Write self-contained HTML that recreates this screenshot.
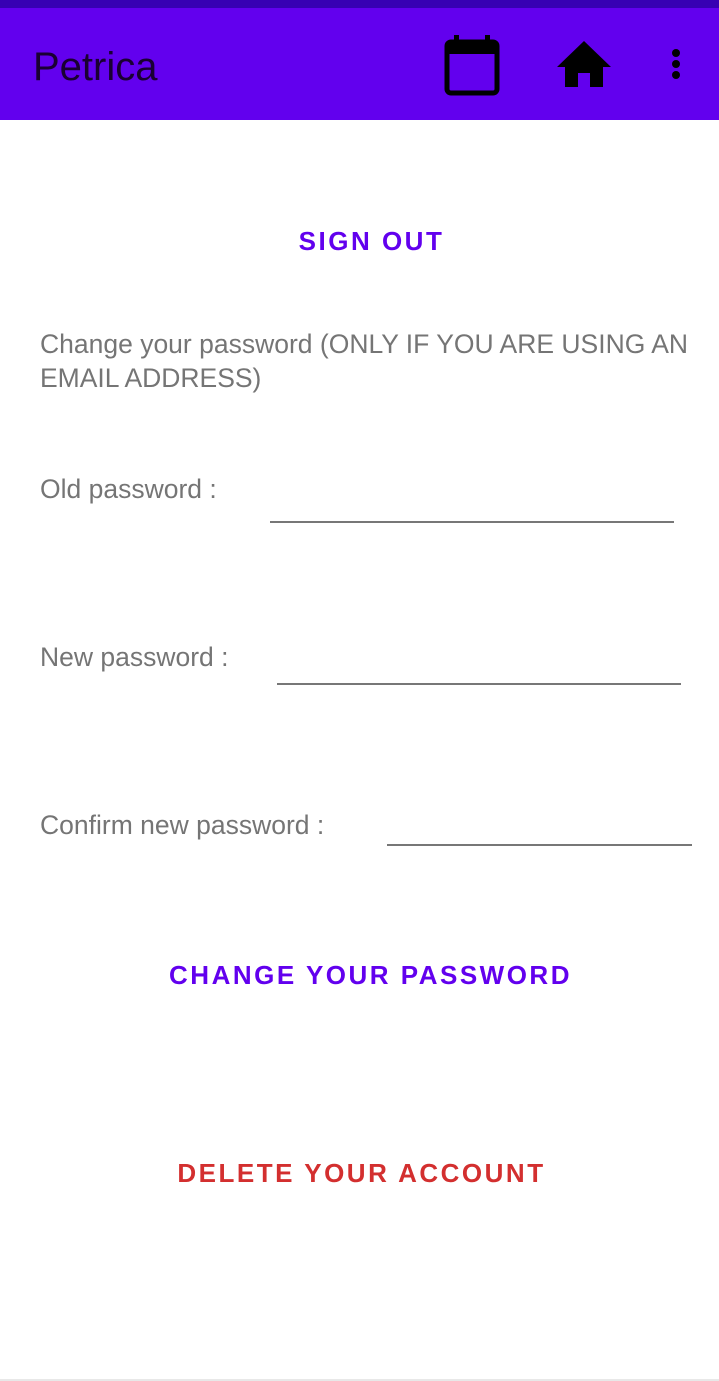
<!DOCTYPE html>
<html><head><meta charset="utf-8"><style>
body{margin:0;width:719px;height:1381px;background:#fff;font-family:"Liberation Sans",sans-serif;position:relative;overflow:hidden}
.sb{position:absolute;left:0;top:0;width:719px;height:8px;background:#3700B3}
.ab{position:absolute;left:0;top:8px;width:719px;height:112px;background:#6200EE}
.t{position:absolute;color:#757575;font-size:26.5px;white-space:nowrap}
.btn{position:absolute;left:0;width:719px;text-align:center;font-size:26px;font-weight:bold;letter-spacing:2.5px}
.ln{position:absolute;height:2px;background:#777}
</style></head><body>
<div class="sb"></div><div class="ab"></div>
<div style="position:absolute;left:33px;top:45px;font-size:40px;color:#1a0033">Petrica</div>
<svg style="position:absolute;left:440px;top:32px" width="64" height="66" viewBox="0 0 64 66">
<rect x="7" y="10" width="50" height="51" rx="4" fill="none" stroke="#000" stroke-width="5"/>
<rect x="7" y="10" width="50" height="12" fill="#000"/>
<rect x="14" y="3" width="5" height="10" fill="#000"/><rect x="45" y="3" width="5" height="10" fill="#000"/></svg>
<svg style="position:absolute;left:557px;top:41px" width="54" height="46" viewBox="0 0 54 46">
<path d="M27 0 L54 26 L46 26 L46 46 L33 46 L33 32 L21 32 L21 46 L8 46 L8 26 L0 26 Z" fill="#000"/></svg>
<svg style="position:absolute;left:670px;top:48px" width="12" height="34"><circle cx="6" cy="5" r="4"/><circle cx="6" cy="16" r="4"/><circle cx="6" cy="27" r="4"/></svg>
<div class="btn" style="top:226px;color:#6200EE;left:12px">SIGN OUT</div>
<div class="t" style="left:40px;top:327px;line-height:34px">Change your password (ONLY IF YOU ARE USING AN<br>EMAIL ADDRESS)</div>
<div class="t" style="left:40px;top:474px">Old password :</div>
<div class="ln" style="left:270px;top:521px;width:404px"></div>
<div class="t" style="left:40px;top:642px">New password :</div>
<div class="ln" style="left:277px;top:683px;width:404px"></div>
<div class="t" style="left:40px;top:810px">Confirm new password :</div>
<div class="ln" style="left:387px;top:844px;width:305px"></div>
<div class="btn" style="top:960px;color:#6200EE;left:11px">CHANGE YOUR PASSWORD</div>
<div class="btn" style="top:1158px;color:#D32F2F;left:2px">DELETE YOUR ACCOUNT</div>
<div style="position:absolute;left:0;top:1379px;width:719px;height:2px;background:#e8e8e8"></div>
</body></html>
